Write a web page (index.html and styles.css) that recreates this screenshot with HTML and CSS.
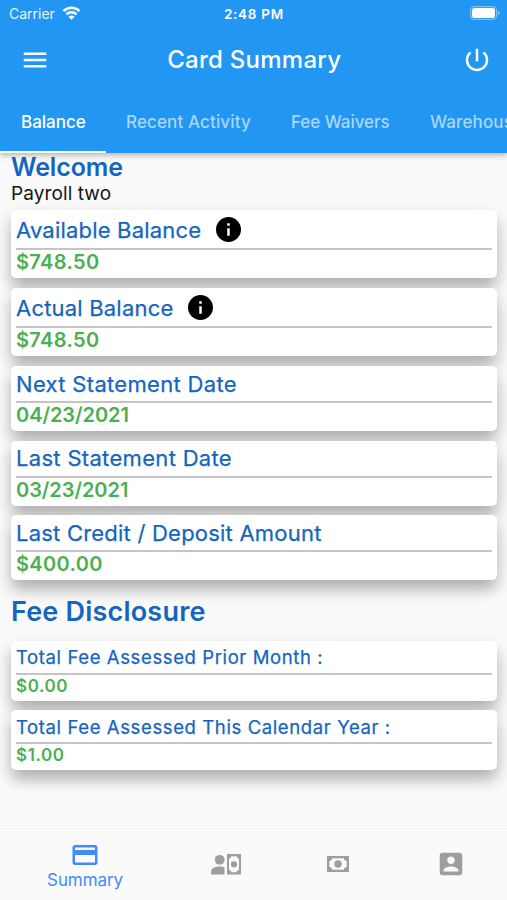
FILE: index.html
```html
<!DOCTYPE html>
<html lang="en">
<head>
<meta charset="utf-8">
<title>Card Summary</title>
<link rel="stylesheet" href="styles.css">
</head>
<body>
<div class="app">
<header class="header">
  <div class="status">
    <span class="carrier">Carrier</span>
    <svg class="wifi" viewBox="0 0 18 14"><g fill="none" stroke="#fff" stroke-width="2.5"><path d="M1 5.2C5.6.7 12.4.7 17 5.2"/><path d="M3.9 8.3c2.9-2.8 7.3-2.8 10.2 0"/></g><path fill="#fff" d="M6 10.7c1.7-1.6 4.3-1.6 6 0L9 13.8z"/></svg>
    <span class="time">2:48 PM</span>
    <svg class="battery" viewBox="0 0 30 14"><rect x=".6" y=".6" width="26" height="12.8" rx="3.8" fill="none" stroke="#fff" stroke-opacity=".4" stroke-width="1.2"/><rect x="2" y="2" width="23" height="10" rx="2.3" fill="#fff"/><path d="M28 4.7c2 .8 2 3.8 0 4.6z" fill="#fff" fill-opacity=".45"/></svg>
  </div>
  <div class="toolbar">
    <svg class="icon menu" viewBox="0 0 24 24"><path d="M3 18h18v-2H3zm0-5h18v-2H3zm0-7v2h18V6z"/></svg>
    <h1 class="title">Card Summary</h1>
    <svg class="icon" viewBox="0 0 24 24"><path d="M13 3h-2v10h2zm4.83 2.17-1.42 1.42C17.99 7.86 19 9.81 19 12c0 3.87-3.13 7-7 7s-7-3.13-7-7c0-2.19 1.01-4.14 2.58-5.42L6.17 5.17C4.23 6.82 3 9.26 3 12c0 4.97 4.03 9 9 9s9-4.03 9-9c0-2.74-1.23-5.18-3.17-6.83"/></svg>
  </div>
  <nav class="tabs">
    <span class="tab active">Balance</span>
    <span class="tab recent">Recent Activity</span>
    <span class="tab waivers">Fee Waivers</span>
    <span class="tab">Warehouse</span>
  </nav>
</header>
<main class="content">
  <h2 class="heading">Welcome</h2>
  <p class="name">Payroll two</p>
  <section class="card tall">
    <div class="label available"><span>Available Balance</span><svg class="info" viewBox="2 2 20 20"><circle cx="12" cy="12" r="10"/><path fill="#fff" d="M11 7h2v2h-2zm0 4h2v6h-2z"/></svg></div>
    <div class="value">$748.50</div>
  </section>
  <section class="card tall">
    <div class="label available"><span>Actual Balance</span><svg class="info" viewBox="2 2 20 20"><circle cx="12" cy="12" r="10"/><path fill="#fff" d="M11 7h2v2h-2zm0 4h2v6h-2z"/></svg></div>
    <div class="value">$748.50</div>
  </section>
  <section class="card">
    <div class="label"><span>Next Statement Date</span></div>
    <div class="value date">04/23/2021</div>
  </section>
  <section class="card">
    <div class="label"><span>Last Statement Date</span></div>
    <div class="value date">03/23/2021</div>
  </section>
  <section class="card">
    <div class="label credit"><span>Last Credit / Deposit Amount</span></div>
    <div class="value">$400.00</div>
  </section>
  <h2 class="heading fees">Fee Disclosure</h2>
  <section class="card small">
    <div class="label"><span>Total Fee Assessed Prior Month :</span></div>
    <div class="value">$0.00</div>
  </section>
  <section class="card small">
    <div class="label"><span>Total Fee Assessed This Calendar Year :</span></div>
    <div class="value">$1.00</div>
  </section>
</main>
<footer class="bottom">
  <div class="item selected"><svg class="nav-icon" viewBox="0 0 24 24"><path d="M20 4H4c-1.11 0-1.99.89-1.99 2L2 18c0 1.11.89 2 2 2h16c1.11 0 2-.89 2-2V6c0-1.11-.89-2-2-2m0 14H4v-6h16zm0-10H4V6h16z"/></svg><span class="nav-text">Summary</span></div>
  <div class="item"><svg class="nav-icon wide" viewBox="0 0 30 21"><circle cx="8.7" cy="5.8" r="4.9"/><path d="M0 20.5v-3.1c0-3.1 4.3-5 8.7-5 2 0 3.8.4 4.8 1v7.1z"/><path fill-rule="evenodd" d="M16 0h14v20.5H16zm4.2 2.3c0 1.3-.9 2.2-2.2 2.2V16c1.3 0 2.2.9 2.2 2.2h5.6c0-1.3.9-2.2 2.2-2.2V4.5c-1.3 0-2.2-.9-2.2-2.2z"/><circle cx="23" cy="10.3" r="3.1"/></svg></div>
  <div class="item"><svg class="nav-icon note" viewBox="0 0 22 16"><path fill-rule="evenodd" d="M0 0h22v16H0zm5 2.3C5 4 4 5 2.3 5v6C4 11 5 12 5 13.7h12c0-1.7 1-2.7 2.7-2.7V5C18 5 17 4 17 2.3z"/><circle cx="11" cy="8" r="3.7"/></svg></div>
  <div class="item"><svg class="nav-icon" viewBox="0 0 24 24"><path d="M3 5v14c0 1.1.89 2 2 2h14c1.1 0 2-.9 2-2V5c0-1.1-.9-2-2-2H5c-1.11 0-2 .9-2 2m12 4c0 1.66-1.34 3-3 3s-3-1.34-3-3 1.34-3 3-3 3 1.34 3 3m-9 8c0-2 4-3.1 6-3.1s6 1.1 6 3.1v1H6z"/></svg></div>
</footer>
</div>
</body>
</html>
```

FILE: styles.css
```css
* { box-sizing: border-box; }
body { margin: 0; font-family: Inter, sans-serif; background: #fafafa; }
h1, h2, p { margin: 0; }
.app { width: 507px; height: 900px; display: flex; flex-direction: column; overflow: hidden; }
.header { height: 152.5px; flex: none; background: #2196f3; color: #fff; box-shadow: 0 2px 6px rgba(0,0,0,.3); position: relative; }
.status { display: flex; align-items: center; height: 28px; padding: 0 7px 0 9px; font-size: 14px; }
.carrier { width: 51px; opacity: .9; margin-top: -1px; }
.wifi { width: 19px; height: 14px; margin-left: 2px; margin-top: -3px; }
.time { font-weight: 600; font-size: 13.5px; letter-spacing: .7px; white-space: nowrap; margin-left: 143px; margin-top: -1px; }
.battery { width: 30px; height: 14px; margin-left: auto; margin-top: -2px; }
.toolbar { height: 63px; display: flex; align-items: center; justify-content: space-between; padding: 0 14.5px 0 20px; }
.icon { width: 30px; height: 30px; fill: #fff; }
.title { font-size: 24px; font-weight: 500; letter-spacing: .25px; line-height: 30px; margin-right: 4px; }
.tabs { display: flex; height: 61.5px; width: 507px; overflow: hidden; }
.tab { flex: none; padding: 0 20px; font-size: 17px; font-weight: 500; line-height: 62px; color: #a9d7fa; white-space: nowrap; letter-spacing: .13px; }
.tab.active { width: 106px; color: #fff; border-bottom: 2.5px solid #fff; padding-left: 21px; padding-right: 0; letter-spacing: 0; }
.tab.recent { width: 165px; }
.tab.waivers { width: 139px; letter-spacing: -.05px; }
.content { flex: 1; padding: 0 10px 0 11px; }
.heading { font-size: 25px; line-height: 29px; font-weight: 600; color: #1565c0; letter-spacing: -.1px; }
.name { font-size: 19px; line-height: 23px; color: #151515; margin-bottom: 5.5px; letter-spacing: .1px; }
.card { height: 65px; margin-bottom: 9.6px; padding: 0 5px; background: #fff; border-radius: 5px; box-shadow: 0 10px 14px -1px rgba(0,0,0,.2), 0 8px 20px rgba(0,0,0,.14); }
.card.tall { height: 68.4px; }
.card.small { height: 60px; }
.label { height: 37px; display: flex; align-items: center; color: #1565c0; font-size: 22px; line-height: 35px; border-bottom: 2px solid #c4c4c4; letter-spacing: .32px; white-space: nowrap; -webkit-text-stroke: .25px #1565c0; }
.tall .label { height: 40px; line-height: 38px; letter-spacing: .2px; }
.label span { padding-top: 1.5px; }
.label.credit { letter-spacing: .22px; }
.value { color: #4caf50; font-weight: 600; font-size: 20px; line-height: 24px; letter-spacing: .35px; }
.value.date { letter-spacing: -.05px; }
.small .label { font-size: 18.5px; height: 34px; line-height: 32px; letter-spacing: .61px; }
.small .value { font-size: 17px; line-height: 22px; letter-spacing: .6px; }
.info { width: 25px; height: 25px; margin-left: 14.5px; margin-top: 1px; -webkit-text-stroke: 0; }
.fees { font-size: 27px; margin: 17px 0 14.4px; letter-spacing: .2px; }
.bottom { height: 72px; flex: none; display: flex; background: #fafafa; border-top: 1px solid #f4f4f4; position: relative; }
.item { flex: 1; display: flex; align-items: center; justify-content: center; color: #9e9e9e; padding-bottom: 1px; }
.selected { flex: 0 0 170px; flex-direction: column; color: #448aff; padding: 1px 0 0; }
.nav-icon { width: 30px; height: 30px; fill: currentColor; }
.nav-icon.wide { height: 21px; }
.nav-icon.note { width: 22px; height: 16px; }
.nav-text { font-size: 17px; line-height: 20px; letter-spacing: -.1px; }
```
